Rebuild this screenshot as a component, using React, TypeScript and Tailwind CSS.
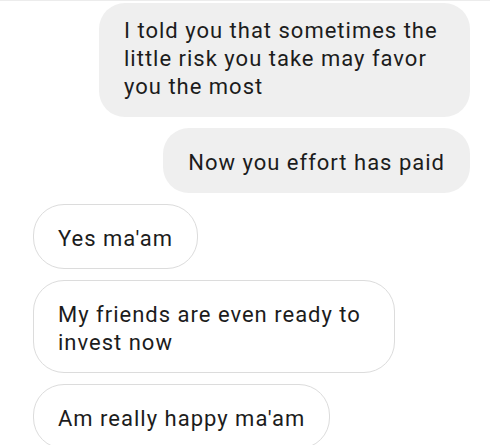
import React from 'react';

type Message = {
  text: string;
  mine: boolean;
};

const messages: Message[] = [
  { text: 'I told you that sometimes the little risk you take may favor you the most', mine: true },
  { text: 'Now you effort has paid', mine: true },
  { text: "Yes ma'am", mine: false },
  { text: 'My friends are even ready to invest now', mine: false },
  { text: "Am really happy ma'am", mine: false },
];

const Bubble: React.FC<{ message: Message; first: boolean }> = ({ message, first }) => {
  if (message.mine) {
    return (
      <div className="flex justify-end pr-[20px]">
        <div
          className={`max-w-[371px] rounded-[26px] bg-[#efefef] px-[25px] ${
            first ? 'pt-[14px] pb-[16px]' : 'pt-[21px] pb-[16px]'
          }`}
        >
          {message.text}
        </div>
      </div>
    );
  }

  return (
    <div className="flex justify-start pl-[33px]">
      <div className="max-w-[362px] rounded-[31px] border border-[#dcdcdc] bg-white px-[24px] pt-[20px] pb-[15px]">
        {message.text}
      </div>
    </div>
  );
};

export default function App() {
  return (
    <div
      className="h-[445px] w-[490px] overflow-hidden border-t border-[#ececec] bg-white pt-[2px] text-[22px] leading-[28px] tracking-[1px] text-[#1c1c1c]"
      style={{ fontFamily: 'Roboto, "Noto Sans", sans-serif' }}
    >
      <div className="flex flex-col gap-[11px]">
        {messages.map((m, i) => (
          <Bubble key={i} message={m} first={i === 0} />
        ))}
      </div>
    </div>
  );
}
